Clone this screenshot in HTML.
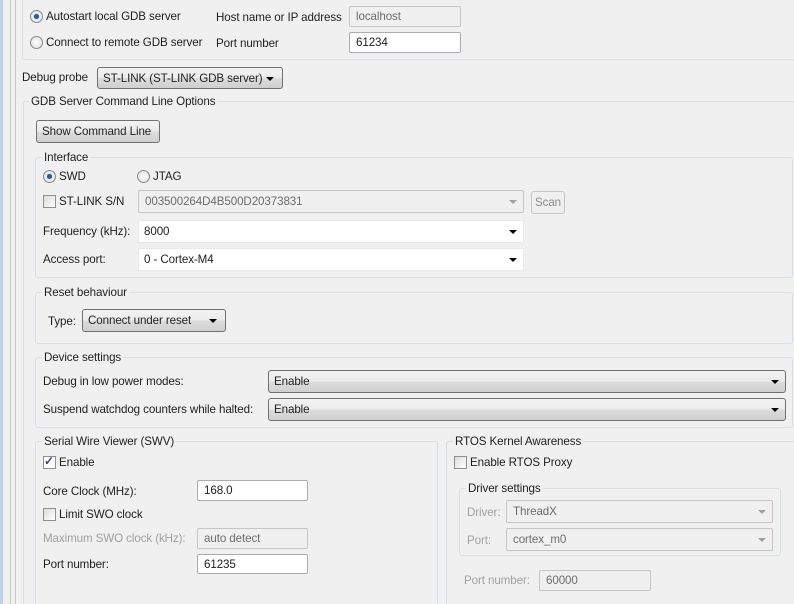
<!DOCTYPE html>
<html><head><meta charset="utf-8"><style>
*{box-sizing:border-box;margin:0;padding:0}
html,body{width:794px;height:604px;overflow:hidden}
body{background:#f0f0f0;font-family:"Liberation Sans",sans-serif;font-size:11.6px;letter-spacing:-0.1px;color:#1e1e1e;position:relative}
.a{position:absolute;white-space:nowrap}
.g{position:absolute;border:1px solid #d5dfe5;border-radius:3px}
.gl{position:absolute;background:#f0f0f0;padding:0 2px;line-height:14px;white-space:nowrap}
.f{position:absolute;background:#fff;border:1px solid #abadb3;padding-left:6px;line-height:19px;border-radius:2px;white-space:nowrap}
.fd{background:#f0f0f0;color:#6d6d6d;border-color:#c5c5c5}
.cb{position:absolute;background:#fff;border:1px solid #e3e9ef;border-radius:2px;padding-left:5px;line-height:21px}
.btn{position:absolute;border:1px solid #707070;border-radius:3px;background:linear-gradient(#f2f2f2 0%,#ebebeb 50%,#dddddd 51%,#cfcfcf 100%);padding-left:5px;line-height:21px;white-space:nowrap}
.arr{position:absolute;right:6px;top:9px;width:0;height:0;border-left:4px solid transparent;border-right:4px solid transparent;border-top:4px solid #000}
.arrd{border-top-color:#a0a0a0}
.rd{position:absolute;width:13px;height:13px;border-radius:50%;border:1px solid #8a8a8a;background:radial-gradient(#fff,#dcdcdc)}
.rd.on::after{content:"";position:absolute;left:3px;top:3px;width:5px;height:5px;border-radius:50%;background:#1b5fa8;box-shadow:0 0 1px #3b8ad8}
.ck{position:absolute;width:13px;height:13px;border:1px solid #8f8f8f;background:linear-gradient(135deg,#dcdcdc,#fff)}
.dis{color:#a0a0a0}
</style></head><body>
<div class="a" style="left:0;top:0;width:3px;height:604px;background:#b9d1ea"></div>
<div class="a" style="left:10px;top:0;width:1px;height:604px;background:#c8c8c8"></div>
<div class="a" style="left:15px;top:0;width:1px;height:604px;background:#c8c8c8"></div>

<div class="g" style="left:22px;top:-5px;width:780px;height:65px"></div>
<div class="rd on" style="left:30px;top:10px"></div><div class="a" style="left:46px;top:10px">Autostart local GDB server</div>
<div class="rd" style="left:30px;top:36px"></div><div class="a" style="left:46px;top:36px">Connect to remote GDB server</div>
<div class="a" style="left:216px;top:11px">Host name or IP address</div>
<div class="a" style="left:216px;top:37px">Port number</div>
<div class="f fd" style="left:349px;top:6px;width:112px;height:21px">localhost</div>
<div class="f" style="left:349px;top:32px;width:112px;height:21px">61234</div>

<div class="a" style="left:22px;top:71px">Debug probe</div>
<div class="btn" style="left:97px;top:67px;width:186px;height:22px">ST-LINK (ST-LINK GDB server)<div class="arr" style="right:8px"></div></div>

<div class="g" style="left:23px;top:101px;width:780px;height:520px"></div>
<div class="gl" style="left:29px;top:95px">GDB Server Command Line Options</div>
<div class="btn" style="left:36px;top:120px;width:124px;height:23px">Show Command Line</div>

<div class="g" style="left:35px;top:157px;width:758px;height:121px"></div>
<div class="gl" style="left:42px;top:151px">Interface</div>
<div class="rd on" style="left:43px;top:170px"></div><div class="a" style="left:59px;top:170px">SWD</div>
<div class="rd" style="left:137px;top:170px"></div><div class="a" style="left:153px;top:170px">JTAG</div>
<div class="ck" style="left:43px;top:195px"></div><div class="a" style="left:59px;top:195px">ST-LINK S/N</div>
<div class="f fd" style="left:138px;top:190px;width:386px;height:23px;line-height:21px">003500264D4B500D20373831<div class="arr arrd" style="top:9px"></div></div>
<div class="f fd" style="left:531px;top:191px;width:34px;height:23px;line-height:21px;padding-left:3px;border-radius:3px;color:#888">Scan</div>
<div class="a" style="left:43px;top:225px">Frequency (kHz):</div>
<div class="cb" style="left:138px;top:220px;width:386px;height:23px">8000<div class="arr"></div></div>
<div class="a" style="left:43px;top:253px">Access port:</div>
<div class="cb" style="left:138px;top:248px;width:386px;height:23px">0 - Cortex-M4<div class="arr"></div></div>

<div class="g" style="left:35px;top:292px;width:758px;height:52px"></div>
<div class="gl" style="left:42px;top:286px">Reset behaviour</div>
<div class="a" style="left:48px;top:315px">Type:</div>
<div class="btn" style="left:82px;top:309px;width:144px;height:23px">Connect under reset<div class="arr" style="right:8px"></div></div>

<div class="g" style="left:35px;top:357px;width:758px;height:71px"></div>
<div class="gl" style="left:42px;top:351px">Device settings</div>
<div class="a" style="left:43px;top:375px">Debug in low power modes:</div>
<div class="btn" style="left:268px;top:370px;width:518px;height:23px">Enable<div class="arr"></div></div>
<div class="a" style="left:43px;top:403px">Suspend watchdog counters while halted:</div>
<div class="btn" style="left:268px;top:398px;width:518px;height:23px">Enable<div class="arr"></div></div>

<div class="g" style="left:35px;top:441px;width:403px;height:180px"></div>
<div class="gl" style="left:42px;top:435px">Serial Wire Viewer (SWV)</div>
<div class="ck" style="left:43px;top:456px;background:#fff"><span style="position:absolute;left:0;top:-3px;font-size:12px;color:#2a4b8d;font-weight:bold">✓</span></div><div class="a" style="left:59px;top:456px">Enable</div>
<div class="a" style="left:43px;top:485px">Core Clock (MHz):</div>
<div class="f" style="left:197px;top:480px;width:111px;height:21px">168.0</div>
<div class="ck" style="left:43px;top:508px"></div><div class="a" style="left:59px;top:508px">Limit SWO clock</div>
<div class="a dis" style="left:43px;top:532px">Maximum SWO clock (kHz):</div>
<div class="f fd" style="left:197px;top:528px;width:111px;height:21px">auto detect</div>
<div class="a" style="left:43px;top:558px">Port number:</div>
<div class="f" style="left:197px;top:554px;width:111px;height:20px">61235</div>

<div class="g" style="left:446px;top:441px;width:350px;height:180px"></div>
<div class="gl" style="left:453px;top:435px">RTOS Kernel Awareness</div>
<div class="ck" style="left:454px;top:456px"></div><div class="a" style="left:470px;top:456px">Enable RTOS Proxy</div>
<div class="g" style="left:459px;top:488px;width:322px;height:68px"></div>
<div class="gl" style="left:466px;top:482px">Driver settings</div>
<div class="a dis" style="left:467px;top:506px">Driver:</div>
<div class="f fd" style="left:506px;top:500px;width:267px;height:23px;line-height:21px">ThreadX<div class="arr arrd"></div></div>
<div class="a dis" style="left:467px;top:534px">Port:</div>
<div class="f fd" style="left:506px;top:528px;width:267px;height:23px;line-height:21px">cortex_m0<div class="arr arrd"></div></div>
<div class="a dis" style="left:464px;top:574px">Port number:</div>
<div class="f fd" style="left:539px;top:570px;width:112px;height:21px">60000</div>
</body></html>
